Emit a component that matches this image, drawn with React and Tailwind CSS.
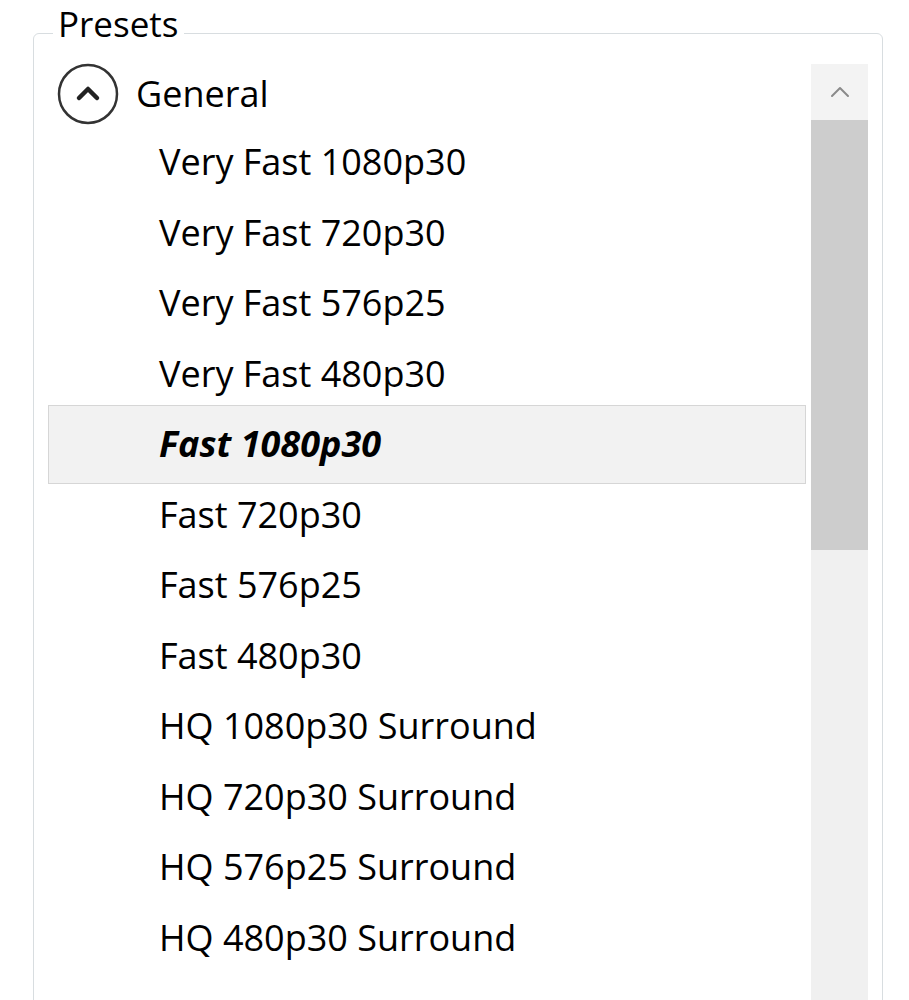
import React from 'react';

const presets = [
  'Very Fast 1080p30',
  'Very Fast 720p30',
  'Very Fast 576p25',
  'Very Fast 480p30',
  'Fast 1080p30',
  'Fast 720p30',
  'Fast 576p25',
  'Fast 480p30',
  'HQ 1080p30 Surround',
  'HQ 720p30 Surround',
  'HQ 576p25 Surround',
  'HQ 480p30 Surround',
];

const selected = 'Fast 1080p30';

const CollapseIcon = () => (
  <svg width="62" height="62" viewBox="0 0 62 62" fill="none">
    <circle cx="31" cy="31" r="29" stroke="#333" strokeWidth="2.5" />
    <polyline
      points="22,35 31,26 40,35"
      stroke="#222"
      strokeWidth="4.5"
      strokeLinecap="round"
      strokeLinejoin="round"
    />
  </svg>
);

const App = () => {
  return (
    <div
      className="w-[909px] h-[1000px] overflow-hidden bg-white pt-[6px] pl-[33px] pr-[26px] text-black"
      style={{ fontFamily: '"Open Sans", "Noto Sans", sans-serif' }}
    >
      <fieldset className="h-[1040px] border border-[#d8dde0] rounded-[6px] pl-[14px] pr-[14px] pt-[4px]">
        <legend className="ml-[5px] px-[5px] pb-[18px] text-[35px] leading-[36px]">Presets</legend>

        <div className="flex">
          {/* Tree list */}
          <div className="flex-1 flex flex-col">
            <div className="h-[63px] flex items-center pl-[9px] gap-[17px] pb-[4px]">
              <CollapseIcon />
              <span className="text-[36px] leading-none">General</span>
            </div>
            {presets.map((name) =>
              name === selected ? (
                <div
                  key={name}
                  className="h-[78.5px] -my-[4px] mr-[5px] flex items-center pl-[110px] bg-[#f2f2f2] border border-[#d6d6d6]"
                >
                  <span className="text-[36px] font-bold italic">{name}</span>
                </div>
              ) : (
                <div key={name} className="h-[70.5px] flex items-center pl-[111px]">
                  <span className="text-[36px]">{name}</span>
                </div>
              )
            )}
          </div>

          {/* Scrollbar */}
          <div className="w-[57px] h-[960px] flex flex-col bg-[#f0f0f0]">
            <div className="h-[56px] flex items-center justify-center bg-[#f3f3f3]">
              <svg width="22" height="14" viewBox="0 0 22 14" fill="none">
                <polyline
                  points="3,11 11,3 19,11"
                  stroke="#8a8a8a"
                  strokeWidth="2"
                  strokeLinecap="round"
                  strokeLinejoin="round"
                />
              </svg>
            </div>
            <div className="h-[430px] bg-[#cdcdcd]" />
          </div>
        </div>
      </fieldset>
    </div>
  );
};

export default App;
